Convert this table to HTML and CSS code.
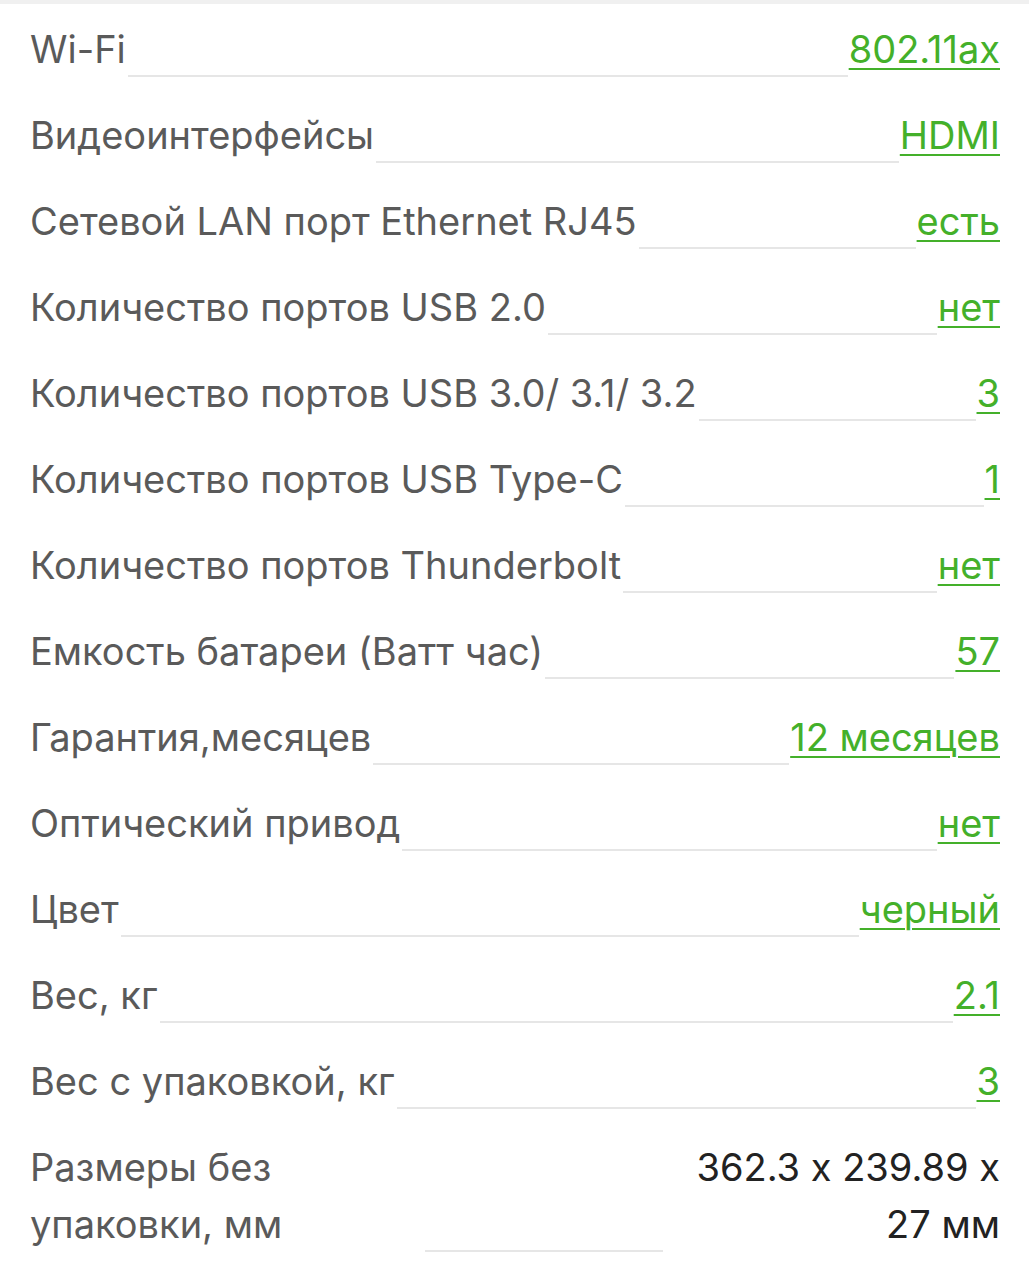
FILE: index.html
```html
<!DOCTYPE html>
<html lang="ru">
<head>
<meta charset="utf-8">
<title>Характеристики</title>
<link rel="stylesheet" href="styles.css">
</head>
<body>
<div class="topbar"></div>
<div class="specs">
  <div class="row"><span class="label">Wi-Fi</span><span class="fill"></span><a class="value" href="#">802.11ax</a></div>
  <div class="row"><span class="label">Видеоинтерфейсы</span><span class="fill"></span><a class="value" href="#">HDMI</a></div>
  <div class="row"><span class="label">Сетевой LAN порт Ethernet RJ45</span><span class="fill"></span><a class="value" href="#">есть</a></div>
  <div class="row"><span class="label">Количество портов USB 2.0</span><span class="fill"></span><a class="value" href="#">нет</a></div>
  <div class="row"><span class="label">Количество портов USB 3.0/ 3.1/ 3.2</span><span class="fill"></span><a class="value" href="#">3</a></div>
  <div class="row"><span class="label">Количество портов USB Type-C</span><span class="fill"></span><a class="value" href="#">1</a></div>
  <div class="row"><span class="label">Количество портов Thunderbolt</span><span class="fill"></span><a class="value" href="#">нет</a></div>
  <div class="row"><span class="label">Емкость батареи (Ватт час)</span><span class="fill"></span><a class="value" href="#">57</a></div>
  <div class="row"><span class="label">Гарантия,месяцев</span><span class="fill"></span><a class="value" href="#">12 месяцев</a></div>
  <div class="row"><span class="label">Оптический привод</span><span class="fill"></span><a class="value" href="#">нет</a></div>
  <div class="row"><span class="label">Цвет</span><span class="fill"></span><a class="value" href="#">черный</a></div>
  <div class="row"><span class="label">Вес, кг</span><span class="fill"></span><a class="value" href="#">2.1</a></div>
  <div class="row"><span class="label">Вес с упаковкой, кг</span><span class="fill"></span><a class="value" href="#">3</a></div>
  <div class="row row-wrap"><span class="label">Размеры без упаковки, мм</span><span class="fill"></span><span class="value plain">362.3 x 239.89 x 27 мм</span></div>
</div>
</body>
</html>
```

FILE: styles.css
```css
html, body {
  margin: 0;
  padding: 0;
  background: #ffffff;
}

body {
  font-family: Inter, "Noto Sans", "Liberation Sans", sans-serif;
  font-size: 38px;
  font-weight: 400;
  line-height: 57px;
  color: #5a5a5a;
  font-feature-settings: "calt" 0;
}

.topbar {
  height: 4px;
  background: #f0f0f0;
}

.specs {
  padding: 0 29px 0 30px;
}

.row {
  display: flex;
  align-items: flex-end;
  padding: 17px 0 12px;
}

.label {
  flex: 0 0 auto;
  white-space: nowrap;
  color: #5a5a5a;
}

.fill {
  flex: 1 1 auto;
  min-width: 20px;
  height: 0;
  margin: 0 1px 1px 2px;
  border-bottom: 2px solid #e6e6e6;
}

.value {
  flex: 0 0 auto;
  white-space: nowrap;
  color: #44b02a;
  text-decoration: underline;
  text-decoration-thickness: 2px;
  text-underline-offset: 5px;
}

.row-wrap .label {
  flex: 0 0 393px;
  white-space: normal;
}

.row-wrap .value {
  flex: 0 0 336px;
  white-space: normal;
  text-align: right;
}

.value.plain {
  color: #222222;
  text-decoration: none;
}
```
